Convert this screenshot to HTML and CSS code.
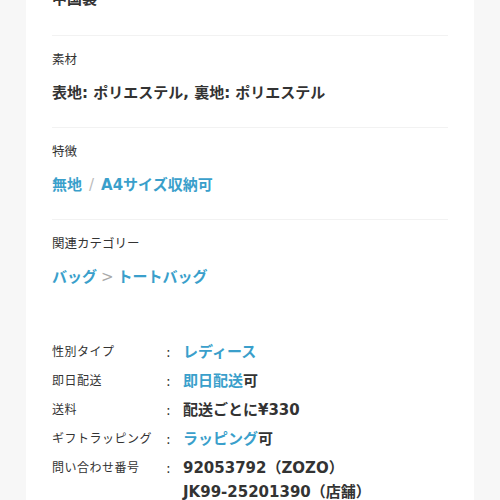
FILE: index.html
```html
<!DOCTYPE html>
<html lang="ja">
<head>
<meta charset="utf-8">
<link rel="stylesheet" href="styles.css">
</head>
<body>
<div class="card">
  <div class="block first">
    <div class="value">中国製</div>
  </div>
  <div class="block">
    <div class="label">素材</div>
    <div class="value">表地: ポリエステル, 裏地: ポリエステル</div>
  </div>
  <div class="block">
    <div class="label">特徴</div>
    <div class="value"><span class="link">無地</span><span class="sep">/</span><span class="link">A4サイズ収納可</span></div>
  </div>
  <div class="block last">
    <div class="label">関連カテゴリー</div>
    <div class="value"><span class="link">バッグ</span><span class="chev">&gt;</span><span class="link">トートバッグ</span></div>
  </div>
  <dl class="specs">
    <div class="row"><dt>性別タイプ</dt><span class="colon">:</span><dd><span class="link">レディース</span></dd></div>
    <div class="row"><dt>即日配送</dt><span class="colon">:</span><dd><span class="link">即日配送</span>可</dd></div>
    <div class="row"><dt>送料</dt><span class="colon">:</span><dd>配送ごとに¥330</dd></div>
    <div class="row"><dt>ギフトラッピング</dt><span class="colon">:</span><dd><span class="link">ラッピング</span>可</dd></div>
    <div class="row"><dt>問い合わせ番号</dt><span class="colon">:</span><dd>92053792（ZOZO）<br>JK99-25201390（店舗）</dd></div>
  </dl>
</div>
</body>
</html>
```
FILE: styles.css
```css
html, body {
  margin: 0;
  padding: 0;
  background: #f7f7f7;
  height: 500px;
  overflow: hidden;
}
body {
  font-family: "DejaVu Sans", "Noto Sans CJK JP", sans-serif;
  color: #333;
}
.card {
  margin: 0 26px;
  background: #fff;
  padding: 0 26px;
  height: 520px;
}
.block {
  border-top: 1px solid #f2f2f2;
  padding: 14px 0 23px;
}
.block.first {
  border-top: none;
  margin-top: -12px;
  padding: 0 0 25px;
}
.block.last {
  padding-bottom: 0;
}
.label {
  font-size: 12.5px;
  line-height: 20px;
  height: 20px;
  color: #333;
}
.value {
  margin-top: 12px;
  font-size: 15px;
  line-height: 22px;
  height: 22px;
  font-weight: bold;
  color: #333;
  white-space: nowrap;
}
.first .value { margin-top: 0; }
.link { color: #3a9fcb; }
.sep {
  color: #bbb;
  font-weight: normal;
  margin: 0 7px;
}
.chev {
  color: #aaa;
  font-weight: normal;
  margin: 0 4px;
}
.specs {
  margin: 52px 0 0;
  display: flex;
  flex-direction: column;
  gap: 5px;
}
.row {
  display: flex;
  align-items: flex-start;
}
.row dt {
  width: 114px;
  font-size: 12px;
  letter-spacing: 0.5px;
  line-height: 24px;
  color: #333;
}
.colon {
  width: 17px;
  font-size: 14px;
  line-height: 24px;
  color: #333;
}
.row dd {
  margin: 0;
  font-size: 15px;
  line-height: 24px;
  font-weight: bold;
  color: #333;
}
```
